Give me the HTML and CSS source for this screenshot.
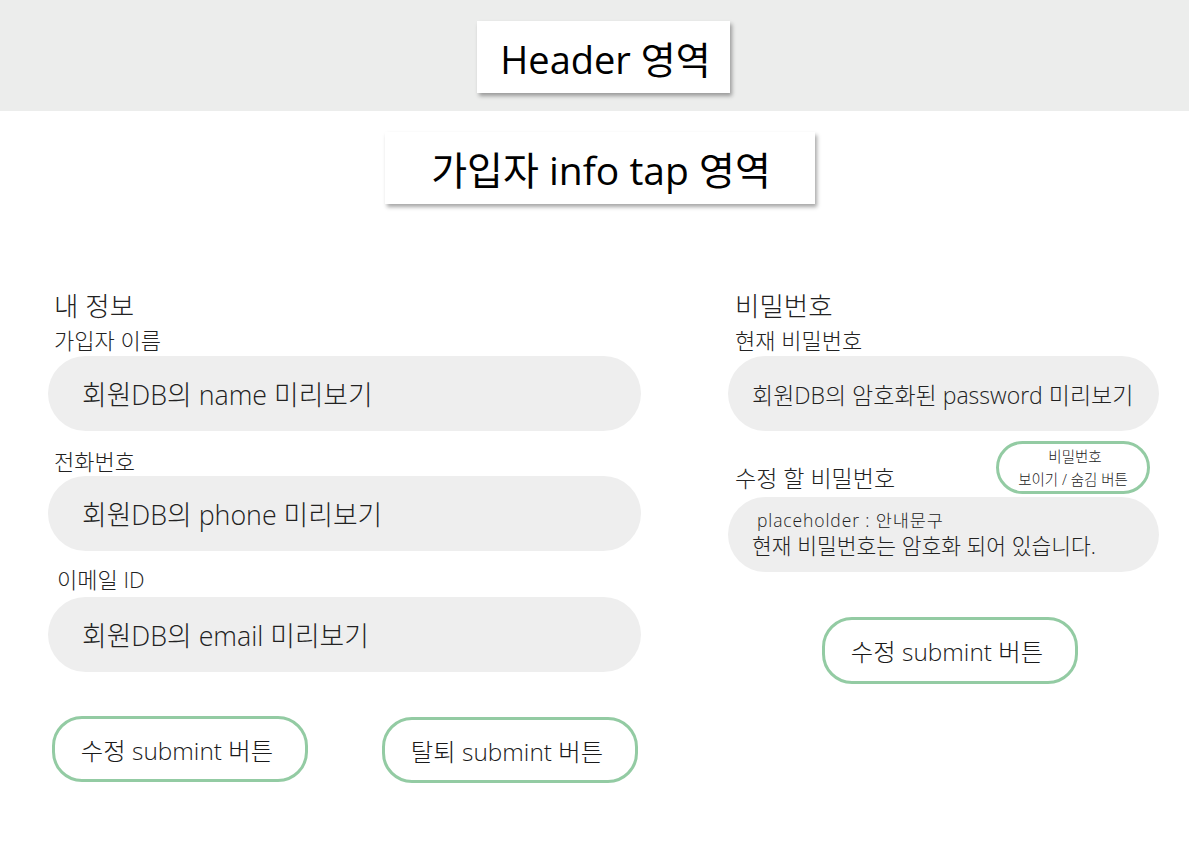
FILE: index.html
```html
<!DOCTYPE html>
<html lang="ko">
<head>
<meta charset="utf-8">
<title>가입자 info</title>
<link rel="stylesheet" href="styles.css">
</head>
<body>
<header class="header-bar">
  <div class="header-box">Header 영역</div>
</header>
<div class="tab-row">
  <div class="tab-box">가입자 info tap 영역</div>
</div>
<main class="main">
  <section class="col col-left">
    <h2 class="sec-title">내 정보</h2>
    <div class="label lbl-name">가입자 이름</div>
    <div class="field field-name">회원DB의 name 미리보기</div>
    <div class="label lbl-phone">전화번호</div>
    <div class="field field-phone">회원DB의 phone 미리보기</div>
    <div class="label lbl-email">이메일 ID</div>
    <div class="field field-email">회원DB의 email 미리보기</div>
    <div class="btn-row">
      <button class="btn btn-edit">수정 submint 버튼</button>
      <button class="btn btn-leave">탈퇴 submint 버튼</button>
    </div>
  </section>
  <section class="col col-right">
    <h2 class="sec-title">비밀번호</h2>
    <div class="label lbl-name">현재 비밀번호</div>
    <div class="field field-pw">회원DB의 암호화된 password 미리보기</div>
    <div class="pw-row">
      <div class="label lbl-new">수정 할 비밀번호</div>
      <button class="toggle">
        <span class="toggle-line1">비밀번호</span>
        <span class="toggle-line2">보이기 / 숨김 버튼</span>
      </button>
    </div>
    <div class="field field-new">
      <span class="ph-small">placeholder : 안내문구</span>
      <span class="ph-main">현재 비밀번호는 암호화 되어 있습니다.</span>
    </div>
    <button class="btn btn-pw">수정 submint 버튼</button>
  </section>
</main>
</body>
</html>
```

FILE: styles.css
```css
* { box-sizing: border-box; }
html, body { margin: 0; padding: 0; }
body {
  background: #ffffff;
  width: 1189px;
  min-height: 868px;
  font-family: "Open Sans", "Noto Sans CJK KR", sans-serif;
  color: #1a1a1a;
}
.header-bar {
  background: #ecedec;
  height: 111px;
  padding-top: 21px;
  display: flex;
  justify-content: center;
  padding-left: 18px;
}
.header-box {
  width: 253px;
  height: 72px;
  background: #ffffff;
  box-shadow: 2px 3px 4px rgba(0,0,0,0.35);
  font-size: 38px;
  font-weight: 400;
  color: #000;
  display: flex;
  align-items: center;
  justify-content: center;
  padding-left: 4px;
  padding-top: 4px;
  line-height: 1;
}
.tab-row {
  display: flex;
  justify-content: center;
  padding-top: 21px;
  padding-left: 11px;
}
.tab-box {
  width: 430px;
  height: 72px;
  background: #ffffff;
  box-shadow: 2px 3px 4px rgba(0,0,0,0.35);
  font-size: 39px;
  color: #000;
  display: flex;
  align-items: center;
  justify-content: center;
  padding-left: 2px;
  padding-top: 2px;
  line-height: 1;
}
.main {
  display: flex;
  padding-left: 48px;
  padding-top: 87px;
  gap: 87px;
}
.col { display: flex; flex-direction: column; align-items: flex-start; }
.col-left { width: 593px; }
.col-right { width: 431px; }
.sec-title {
  margin: 0;
  font-size: 26.5px;
  font-weight: 300;
  line-height: 30px;
  height: 30px;
  padding-left: 6px;
  color: #222;
}
.col-right .sec-title { padding-left: 7px; }
.label {
  font-size: 22px;
  font-weight: 300;
  line-height: 26px;
  color: #222;
  padding-left: 6px;
}
.lbl-name { margin-top: 6px; }
.col-right .lbl-name { padding-left: 7px; }
.lbl-phone { margin-top: 17px; }
.lbl-email { margin-top: 15px; padding-left: 9px; }
.field {
  width: 100%;
  height: 75px;
  border-radius: 38px;
  background: #eeeeee;
  display: flex;
  align-items: center;
  padding-left: 34px;
  font-size: 26.8px;
  font-weight: 300;
  color: #222;
}
.field-name { margin-top: 3px; }
.field-phone { margin-top: 2px; }
.field-email { margin-top: 5px; }
.field-pw {
  margin-top: 3px;
  font-size: 23px;
  padding-left: 24px;
}
.btn {
  font-family: inherit;
  background: #ffffff;
  border: 3px solid #93cba3;
  border-radius: 30px;
  width: 256px;
  height: 66px;
  font-size: 24.4px;
  font-weight: 300;
  color: #1a1a1a;
  padding: 0 6px 0 0;
  display: flex;
  align-items: center;
  justify-content: center;
}
.btn-row {
  display: flex;
  gap: 74px;
  margin-top: 44px;
  padding-left: 4px;
}
.btn-leave { margin-top: 1px; }
.pw-row {
  width: 100%;
  display: flex;
  justify-content: space-between;
  align-items: flex-end;
  margin-top: 10px;
  padding-right: 9px;
}
.lbl-new {
  font-size: 23px;
  padding-left: 7px;
  margin-bottom: 3px;
}
.toggle {
  font-family: inherit;
  width: 154px;
  height: 53px;
  background: #ffffff;
  border: 3px solid #93cba3;
  border-radius: 27px;
  display: flex;
  flex-direction: column;
  align-items: center;
  justify-content: center;
  gap: 8px;
  padding: 0;
  color: #222;
  font-size: 14.5px;
  font-weight: 300;
  line-height: 15px;
}
.toggle-line1 { padding-left: 4px; }
.field-new {
  margin-top: 3px;
  flex-direction: column;
  align-items: flex-start;
  justify-content: center;
  padding-left: 24px;
}
.ph-small {
  font-size: 17.5px;
  line-height: 20px;
  padding-left: 5px;
  letter-spacing: 0.9px;
}
.ph-main {
  font-size: 21.5px;
  line-height: 26px;
  margin-top: 3px;
}
.btn-pw {
  margin-top: 45px;
  margin-left: 94px;
  height: 67px;
}
```
